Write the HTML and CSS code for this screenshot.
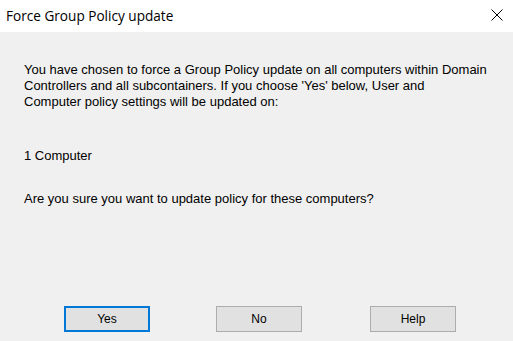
FILE: index.html
```html
<!DOCTYPE html>
<html lang="en">
<head>
    <meta charset="UTF-8">
    <title>Force Group Policy update</title>
    <link rel="stylesheet" href="styles.css">
</head>
<body>
    <div class="dialog">
        <div class="titlebar">
            <span class="title">Force Group Policy update</span>
            <span class="close">
                <svg width="12" height="12" viewBox="0 0 12 12">
                    <path d="M0.5 0.5 L11.5 11.5 M11.5 0.5 L0.5 11.5" stroke="#000" stroke-width="1" fill="none"/>
                </svg>
            </span>
        </div>
        <div class="content">
            <p class="message">You have chosen to force a Group Policy update on all computers within Domain<br>Controllers and all subcontainers. If you choose 'Yes' below, User and<br>Computer policy settings will be updated on:</p>
            <p class="count">1 Computer</p>
            <p class="question">Are you sure you want to update policy for these computers?</p>
        </div>
        <div class="buttons">
            <button class="btn default">Yes</button>
            <button class="btn">No</button>
            <button class="btn">Help</button>
        </div>
    </div>
</body>
</html>
```

FILE: styles.css
```css
body {
    margin: 0;
    background-color: #f0f0f0;
    font-family: "Liberation Sans", Arial, sans-serif;
}

.dialog {
    width: 513px;
    height: 341px;
    display: flex;
    flex-direction: column;
}

.titlebar {
    height: 32px;
    background-color: #fff;
    display: flex;
    align-items: center;
    justify-content: space-between;
    padding: 0 10px 0 6px;
}

.title {
    font-family: "Open Sans", "Noto Sans", sans-serif;
    font-size: 13.6px;
    color: #000;
    margin-top: -2px;
}

.close {
    display: flex;
    margin-top: -2px;
}

.content {
    flex: 1;
    padding: 30px 10px 0 24px;
    font-size: 13px;
    line-height: 16px;
    color: #000;
}

.content p {
    margin: 0;
    white-space: nowrap;
}

.count {
    padding-top: 38px;
}

.question {
    padding-top: 27px;
}

.buttons {
    display: flex;
    padding: 0 0 9px 64px;
    gap: 66px;
}

.btn {
    width: 86px;
    height: 26px;
    background-color: #e1e1e1;
    border: 1px solid #adadad;
    font-family: "Liberation Sans", Arial, sans-serif;
    font-size: 12px;
    color: #000;
    padding: 0;
}

.btn + .btn + .btn {
    margin-left: 2px;
}

.default {
    border: 2px solid #0078d7;
}
```
